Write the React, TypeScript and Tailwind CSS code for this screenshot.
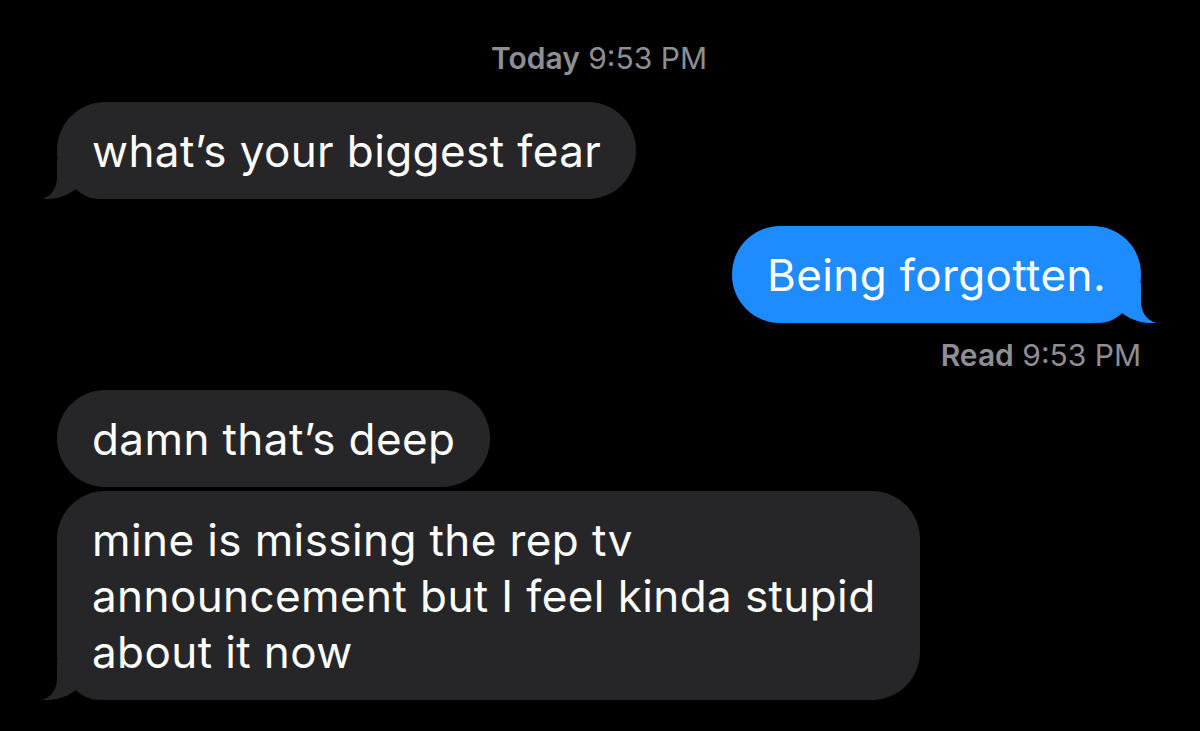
import React from 'react';

type Side = 'in' | 'out';

// tail drawn under the bottom corner of the last bubble in a group
function Tail({ side, color }: { side: Side; color: string }) {
  if (side === 'in') {
    return (
      <svg className="absolute bottom-0 left-[-16px] h-[40px] w-[60px]" viewBox="0 0 60 40">
        <path d="M16 0 L16 18 C16 30 10 37 1 40 C14 41 26 37 35 30 C42 37 50 40 60 40 L60 0 Z" fill={color} />
      </svg>
    );
  }
  return (
    <svg className="absolute bottom-0 right-[-16px] h-[40px] w-[60px]" viewBox="0 0 60 40">
      <path d="M44 0 L44 18 C44 30 50 37 59 40 C46 41 34 37 25 30 C18 37 10 40 0 40 L0 0 Z" fill={color} />
    </svg>
  );
}

function Bubble({
  side,
  tail = false,
  className = '',
  children
}: {
  side: Side;
  tail?: boolean;
  className?: string;
  children: React.ReactNode;
}) {
  const color = side === 'in' ? '#262629' : '#1e8bff';
  return (
    <div
      className={`relative rounded-[48px] px-[35px] py-[20.5px] text-[44px] leading-[56px] tracking-[0.4px] text-white ${
        side === 'in' ? 'self-start bg-[#262629]' : 'self-end bg-[#1e8bff]'
      } ${className}`}
    >
      {tail && <Tail side={side} color={color} />}
      <span className="relative">{children}</span>
    </div>
  );
}

export default function App() {
  return (
    <div
      className="flex h-[731px] w-[1200px] flex-col overflow-hidden bg-black pl-[57px] pr-[59px]"
      style={{ fontFamily: 'Inter, Roboto, "Liberation Sans", sans-serif' }}
    >
      {/* Date header */}
      <div className="mt-[40px] text-center text-[30px] leading-[36px] text-[#8e8e93]">
        <span className="font-semibold">Today</span> 9:53 PM
      </div>

      <Bubble side="in" tail className="mt-[26px]">
        what’s your biggest fear
      </Bubble>

      <Bubble side="out" tail className="mt-[27px]">
        Being forgotten.
      </Bubble>

      <div className="mt-[14px] self-end text-[30px] leading-[36px] text-[#8e8e93]">
        <span className="font-semibold">Read</span> 9:53 PM
      </div>

      <Bubble side="in" className="mt-[17px]">
        damn that’s deep
      </Bubble>

      <Bubble side="in" tail className="mt-[4px] w-[863px]">
        mine is missing the rep tv
        <br />
        announcement but I feel kinda stupid
        <br />
        about it now
      </Bubble>
    </div>
  );
}
